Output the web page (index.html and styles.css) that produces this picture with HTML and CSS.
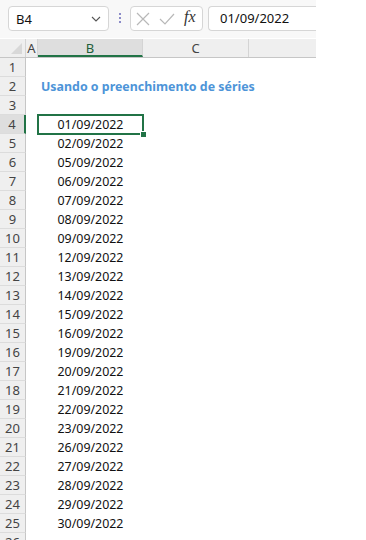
FILE: index.html
```html
<!DOCTYPE html>
<html lang="pt">
<head>
    <meta charset="UTF-8">
    <meta name="viewport" content="width=device-width, initial-scale=1.0">
    <title>Preenchimento de séries</title>
    <link rel="stylesheet" href="styles.css">
</head>
<body>
    <div id="sheet">
        <!-- Formula bar -->
        <div class="formula-bar">
            <div class="name-box">
                <span>B4</span>
                <svg width="10" height="6" viewBox="0 0 10 6"><path d="M1 1 L5 5 L9 1" fill="none" stroke="#555" stroke-width="1.1"/></svg>
            </div>
            <div class="grip"><i></i><i></i><i></i></div>
            <div class="fx-buttons">
                <svg width="14" height="14" viewBox="0 0 14 14"><path d="M1 1 L13 13 M13 1 L1 13" stroke="#b8b8b8" stroke-width="1.2"/></svg>
                <svg width="16" height="12" viewBox="0 0 16 12"><path d="M1 6 L6 11 L15 1" fill="none" stroke="#b8b8b8" stroke-width="1.2"/></svg>
                <span class="fx">fx</span>
            </div>
            <div class="formula-input">01/09/2022</div>
        </div>

        <!-- Column headers -->
        <div class="row header-row">
            <div class="corner"><span class="tri"></span></div>
            <div class="col-head col-a">A</div>
            <div class="col-head col-b selected">B</div>
            <div class="col-head col-c">C</div>
            <div class="col-head col-d"></div>
        </div>

        <div class="row"><div class="rh">1</div><div class="cell"></div></div>
        <div class="row"><div class="rh">2</div><div class="cell title">Usando o preenchimento de séries</div></div>
        <div class="row"><div class="rh">3</div><div class="cell"></div></div>
        <div class="row"><div class="rh active">4</div><div class="cell col-a"></div><div class="cell date current">01/09/2022<span class="handle"></span></div></div>
        <div class="row"><div class="rh">5</div><div class="cell col-a"></div><div class="cell date">02/09/2022</div></div>
        <div class="row"><div class="rh">6</div><div class="cell col-a"></div><div class="cell date">05/09/2022</div></div>
        <div class="row"><div class="rh">7</div><div class="cell col-a"></div><div class="cell date">06/09/2022</div></div>
        <div class="row"><div class="rh">8</div><div class="cell col-a"></div><div class="cell date">07/09/2022</div></div>
        <div class="row"><div class="rh">9</div><div class="cell col-a"></div><div class="cell date">08/09/2022</div></div>
        <div class="row"><div class="rh">10</div><div class="cell col-a"></div><div class="cell date">09/09/2022</div></div>
        <div class="row"><div class="rh">11</div><div class="cell col-a"></div><div class="cell date">12/09/2022</div></div>
        <div class="row"><div class="rh">12</div><div class="cell col-a"></div><div class="cell date">13/09/2022</div></div>
        <div class="row"><div class="rh">13</div><div class="cell col-a"></div><div class="cell date">14/09/2022</div></div>
        <div class="row"><div class="rh">14</div><div class="cell col-a"></div><div class="cell date">15/09/2022</div></div>
        <div class="row"><div class="rh">15</div><div class="cell col-a"></div><div class="cell date">16/09/2022</div></div>
        <div class="row"><div class="rh">16</div><div class="cell col-a"></div><div class="cell date">19/09/2022</div></div>
        <div class="row"><div class="rh">17</div><div class="cell col-a"></div><div class="cell date">20/09/2022</div></div>
        <div class="row"><div class="rh">18</div><div class="cell col-a"></div><div class="cell date">21/09/2022</div></div>
        <div class="row"><div class="rh">19</div><div class="cell col-a"></div><div class="cell date">22/09/2022</div></div>
        <div class="row"><div class="rh">20</div><div class="cell col-a"></div><div class="cell date">23/09/2022</div></div>
        <div class="row"><div class="rh">21</div><div class="cell col-a"></div><div class="cell date">26/09/2022</div></div>
        <div class="row"><div class="rh">22</div><div class="cell col-a"></div><div class="cell date">27/09/2022</div></div>
        <div class="row"><div class="rh">23</div><div class="cell col-a"></div><div class="cell date">28/09/2022</div></div>
        <div class="row"><div class="rh">24</div><div class="cell col-a"></div><div class="cell date">29/09/2022</div></div>
        <div class="row"><div class="rh">25</div><div class="cell col-a"></div><div class="cell date">30/09/2022</div></div>
        <div class="row"><div class="rh">26</div><div class="cell"></div></div>
    </div>
</body>
</html>
```

FILE: styles.css
```css
body {
    margin: 0;
    background: #fff;
    font-family: "Noto Sans", "Open Sans", sans-serif;
    color: #222;
    overflow: hidden;
}
#sheet {
    width: 316px;
}
.formula-bar {
    height: 38px;
    box-sizing: border-box;
    padding: 6px 0 0 8px;
    display: flex;
    align-items: flex-start;
    background: #f8f8f8;
}
.name-box {
    width: 101px;
    height: 25px;
    box-sizing: border-box;
    border: 1px solid #d6d6d6;
    border-radius: 4px;
    background: #fff;
    display: flex;
    align-items: center;
    justify-content: space-between;
    padding: 0 7px 0 7px;
    font-size: 13px;
    color: #111;
}
.grip {
    width: 21px;
    display: flex;
    flex-direction: column;
    align-items: center;
    gap: 2px;
    padding-top: 7px;
}
.grip i {
    width: 2px;
    height: 2px;
    background: #8c8cc8;
}
.fx-buttons {
    width: 73px;
    height: 25px;
    box-sizing: border-box;
    border: 1px solid #d6d6d6;
    border-radius: 4px;
    background: #fff;
    display: flex;
    align-items: center;
    gap: 9px;
    padding-left: 5px;
}
.fx {
    font-family: "Liberation Serif", serif;
    font-style: italic;
    font-size: 16px;
    color: #333;
    margin-top: -3px;
}
.formula-input {
    flex: 1;
    margin-left: 5px;
    height: 25px;
    box-sizing: border-box;
    border: 1px solid #d6d6d6;
    border-right: none;
    border-radius: 4px 0 0 4px;
    background: #fff;
    padding-left: 11px;
    font-size: 13px;
    line-height: 23px;
    color: #111;
}
.row {
    display: flex;
    height: 19px;
}
.header-row {
    margin-top: 1px;
    background: #efefef;
    border-bottom: 1px solid #c6c6c6;
    height: 18px;
    font-size: 13px;
    color: #444;
}
.corner {
    width: 25px;
    border-right: 1px solid #d4d4d4;
    position: relative;
}
.tri {
    position: absolute;
    right: 3px;
    bottom: 3px;
    width: 0;
    height: 0;
    border-left: 11px solid transparent;
    border-bottom: 11px solid #d8d8d8;
}
.col-head {
    text-align: center;
    line-height: 18px;
    border-right: 1px solid #d4d4d4;
    box-sizing: border-box;
}
.col-a { width: 12px; flex: none; }
.col-b { width: 105px; }
.col-c { width: 106px; }
.col-d { flex: 1; border-right: none; }
.col-head.selected {
    background: #dedede;
    border-bottom: 2px solid #217346;
    color: #1f5f3a;
}
.rh {
    width: 26px;
    flex: none;
    box-sizing: border-box;
    background: #efefef;
    border-right: 1px solid #c6c6c6;
    border-bottom: 1px solid #dcdcdc;
    text-align: center;
    font-size: 13px;
    line-height: 18px;
    color: #444;
}
.rh.active {
    background: #dedede;
    border-right: 2px solid #217346;
}
.cell {
    height: 19px;
    font-size: 12.4px;
    line-height: 19px;
}
.title {
    padding-left: 15px;
    font-weight: bold;
    color: #4d94d8;
}
.date {
    width: 105px;
    text-align: center;
    color: #111;
}
.current {
    position: relative;
    outline: 2px solid #217346;
    outline-offset: -1px;
}
.handle {
    position: absolute;
    right: -4px;
    bottom: -4px;
    width: 5px;
    height: 5px;
    background: #217346;
    border: 1px solid #fff;
}
```
